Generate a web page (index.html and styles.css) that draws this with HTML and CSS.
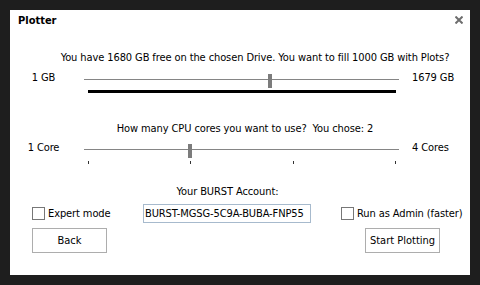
FILE: index.html
```html
<!DOCTYPE html>
<html>
<head>
<meta charset="utf-8">
<link rel="stylesheet" href="styles.css">
</head>
<body>
<div class="window">
  <div class="titlebar">
    <span class="title">Plotter</span>
    <svg class="close" width="8" height="8" viewBox="0 0 8 8"><path d="M0.5 0.5 L7.5 7.5 M7.5 0.5 L0.5 7.5" stroke="#6e6e6e" stroke-width="2" fill="none"/></svg>
  </div>

  <p class="question q1">You have 1680 GB free on the chosen Drive. You want to fill 1000 GB with Plots?</p>
  <div class="slider-row">
    <span class="lbl-min">1 GB</span>
    <div class="slider">
      <div class="rail"><div class="line"></div><div class="thumb" style="left:184px"></div></div>
      <div class="fillbar"></div>
    </div>
    <span class="lbl-max">1679 GB</span>
  </div>

  <p class="question q2">How many CPU cores you want to use?&nbsp; You chose: 2</p>
  <div class="slider-row row2">
    <span class="lbl-min">1 Core</span>
    <div class="slider">
      <div class="rail"><div class="line"></div><div class="thumb" style="left:104px"></div></div>
      <div class="ticks"><i></i><i></i><i></i><i></i></div>
    </div>
    <span class="lbl-max">4 Cores</span>
  </div>

  <p class="question q3">Your BURST Account:</p>
  <div class="form-row">
    <label class="check expert"><span class="box"></span>Expert mode</label>
    <div class="textbox">BURST-MGSG-5C9A-BUBA-FNP55</div>
    <label class="check admin"><span class="box"></span>Run as Admin (faster)</label>
  </div>
  <div class="button-row">
    <button class="btn">Back</button>
    <button class="btn">Start Plotting</button>
  </div>
</div>
</body>
</html>
```
FILE: styles.css
```css
html, body {
  margin: 0;
  padding: 0;
  background: #1e1e1e;
}
body {
  padding: 10px;
  font-family: "DejaVu Sans Condensed", "Liberation Sans", sans-serif;
  font-size: 11px;
  line-height: 13px;
  letter-spacing: -0.1px;
  color: #000;
}
.window {
  background: #fff;
  width: 460px;
  height: 265px;
  display: flex;
  flex-direction: column;
}
.titlebar {
  display: flex;
  justify-content: space-between;
  align-items: flex-start;
  padding: 4px 7px 0 8px;
  height: 13px;
}
.title {
  font-weight: bold;
  font-size: 11px;
  line-height: 13px;
  letter-spacing: 0;
}
.close {
  display: block;
  margin-top: 2px;
}
.question {
  margin: 0;
  text-align: center;
  white-space: nowrap;
}
.q1 { margin-top: 24px; padding-left: 30px; }
.q2 { margin-top: 29px; padding-left: 10px; }
.q3 { margin-top: 21px; padding-right: 25px; }

.slider-row {
  display: grid;
  grid-template-columns: 67px 322px 1fr;
  margin-top: 7px;
}
.row2 { margin-top: 6px; }
.lbl-min { text-align: center; }
.lbl-max { margin-left: 13px; white-space: nowrap; }
.slider {
  margin-left: 7px;
  display: flex;
  flex-direction: column;
}
.rail {
  position: relative;
  height: 18px;
}
.line {
  margin-top: 8px;
  height: 1px;
  background: #858585;
}
.thumb {
  position: absolute;
  top: 3px;
  width: 4px;
  height: 14px;
  background: #7c7c7c;
}
.fillbar {
  margin: 1px 3px 0 4px;
  height: 3px;
  background: #000;
}
.ticks {
  margin-top: 2px;
  padding: 0 3px 0 4px;
  display: flex;
  justify-content: space-between;
}
.ticks i {
  display: block;
  width: 1px;
  height: 3px;
  background: #333;
}

.form-row {
  display: flex;
  align-items: center;
  margin-top: 6px;
  padding-left: 22px;
  height: 19px;
}
.check {
  display: flex;
  align-items: center;
  white-space: nowrap;
}
.box {
  width: 11px;
  height: 11px;
  border: 1px solid #777;
  background: #fff;
  margin-right: 3px;
}
.expert { width: 111px; }
.textbox {
  box-sizing: border-box;
  width: 168px;
  height: 19px;
  border: 1px solid #a7bacd;
  padding: 2px 0 0 1px;
  line-height: 13px;
  white-space: nowrap;
}
.admin { margin-left: 30px; }

.button-row {
  display: flex;
  justify-content: space-between;
  margin-top: 5px;
  padding: 0 30px 0 22px;
}
.btn {
  box-sizing: border-box;
  width: 75px;
  height: 25px;
  background: #fff;
  border: 1px solid #adadad;
  font: inherit;
  color: #000;
  padding: 0;
}
```
